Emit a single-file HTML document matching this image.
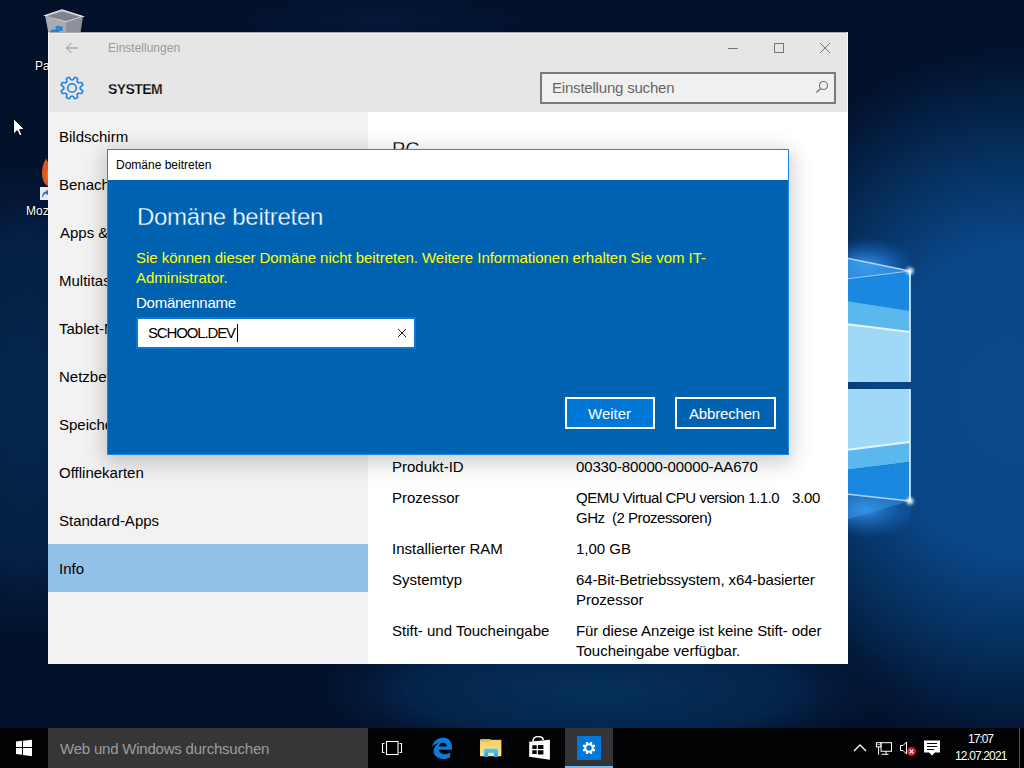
<!DOCTYPE html>
<html><head><meta charset="utf-8">
<style>
*{margin:0;padding:0;box-sizing:border-box}
html,body{width:1024px;height:768px;overflow:hidden}
body{position:relative;font-family:"Liberation Sans",sans-serif;background:#02112a}
.a{position:absolute}
.t15{position:absolute;font-size:15px;line-height:20px;white-space:nowrap;color:#000}
.t12{position:absolute;font-size:12px;line-height:16px;white-space:nowrap}
#wall{left:0;top:0;width:1024px;height:768px}
#win{left:48px;top:32px;width:800px;height:632px;background:#e6e6e6;overflow:hidden}
#side{left:0;top:80px;width:320px;height:552px;background:#f2f2f2}
#content{left:320px;top:80px;width:480px;height:552px;background:#fff}
#dlg{left:107px;top:149px;width:682px;height:306px;background:#0063b1;border:1px solid #1e88e5;box-shadow:0 5px 20px 3px rgba(0,0,0,.2)}
#dlgtitle{left:0;top:0;width:680px;height:30px;background:#fff}
#taskbar{left:0;top:728px;width:1024px;height:40px;background:#020305}
</style></head><body>
<svg id="wall" class="a" width="1024" height="768" viewBox="0 0 1024 768">
<defs>
<radialGradient id="g1" cx="1010" cy="420" r="470" gradientTransform="translate(1010 420) scale(1 0.95) translate(-1010 -420)" gradientUnits="userSpaceOnUse">
<stop offset="0" stop-color="#0c4e92"/><stop offset="0.3" stop-color="#0a4584"/><stop offset="0.55" stop-color="#06305f"/><stop offset="0.8" stop-color="#031a3a"/><stop offset="1" stop-color="#021128" stop-opacity="0"/>
</radialGradient>
<radialGradient id="g2" cx="600" cy="720" r="220" gradientTransform="translate(600 720) scale(1.3 0.5) translate(-600 -720)" gradientUnits="userSpaceOnUse">
<stop offset="0" stop-color="#063266"/><stop offset="1" stop-color="#063266" stop-opacity="0"/>
</radialGradient>
<radialGradient id="glowT">
<stop offset="0" stop-color="#3aa0ff" stop-opacity="0.9"/><stop offset="1" stop-color="#1a70d0" stop-opacity="0"/>
</radialGradient>
<radialGradient id="glowB">
<stop offset="0" stop-color="#3aa0ff" stop-opacity="0.8"/><stop offset="1" stop-color="#1a70d0" stop-opacity="0"/>
</radialGradient>
<linearGradient id="p1" x1="0" y1="0" x2="0" y2="1">
<stop offset="0" stop-color="#1a86e0"/><stop offset="1" stop-color="#2a95e8"/>
</linearGradient>
<radialGradient id="rA"><stop offset="0" stop-color="#0b4a8a"/><stop offset="0.42" stop-color="#0a4585"/><stop offset="0.62" stop-color="#063262"/><stop offset="0.82" stop-color="#031c3e"/><stop offset="1" stop-color="#02102a" stop-opacity="0"/></radialGradient>
<radialGradient id="rB"><stop offset="0" stop-color="#05305a"/><stop offset="0.6" stop-color="#04244a"/><stop offset="1" stop-color="#02102a" stop-opacity="0"/></radialGradient>
<radialGradient id="rC"><stop offset="0" stop-color="#05284e"/><stop offset="0.6" stop-color="#041f42"/><stop offset="1" stop-color="#02102a" stop-opacity="0"/></radialGradient>
<radialGradient id="rD"><stop offset="0" stop-color="#04183a"/><stop offset="1" stop-color="#02102a" stop-opacity="0"/></radialGradient>
<filter id="blur2" x="-2" y="-2" width="5" height="5"><feGaussianBlur stdDeviation="1.8"/></filter>
<clipPath id="clipL"><rect x="0" y="0" width="911" height="768"/></clipPath>
</defs>
<rect width="1024" height="768" fill="#02102a"/>
<ellipse cx="1010" cy="400" rx="320" ry="380" fill="url(#rA)"/>
<ellipse cx="600" cy="690" rx="320" ry="80" fill="url(#rB)"/>
<ellipse cx="24" cy="400" rx="120" ry="280" fill="url(#rC)"/>
<ellipse cx="380" cy="20" rx="260" ry="40" fill="url(#rD)"/>
<!-- logo panes (visible part) -->
<ellipse cx="866" cy="266" rx="50" ry="28" fill="url(#glowT)" clip-path="url(#clipL)"/>
<ellipse cx="866" cy="510" rx="54" ry="28" fill="url(#glowB)" clip-path="url(#clipL)"/>
<path d="M846 258L910 271L846 279Z" fill="#3a9ef0" opacity="0.75"/>
<path d="M846 279L910 271L910 382L846 382Z" fill="#1a87e0"/>
<path d="M846 301L910 311L910 382L846 382Z" fill="#5ab8ee"/>
<path d="M846 324L910 332L910 382L846 382Z" fill="#a0d8f8"/>
<path d="M846 389L910 389L910 442L846 450Z" fill="#a0d8f8"/>
<path d="M846 450L910 442L910 462L846 470Z" fill="#5ab8ee"/>
<path d="M846 470L910 462L910 501L846 494Z" fill="#1a87e0"/>
<path d="M846 494L910 501L846 520Z" fill="#3a9ef0" opacity="0.45"/>
<path d="M846 324L910 332" stroke="#f0faff" stroke-width="2" opacity="0.9"/>
<path d="M846 450L910 442" stroke="#f0faff" stroke-width="2" opacity="0.9"/>
<path d="M846 258L910 271" stroke="#cfeaff" stroke-width="1.5" opacity="0.8"/>
<path d="M846 279L910 271" stroke="#cfeaff" stroke-width="1.2" opacity="0.7"/>
<path d="M846 494L910 501" stroke="#cfeaff" stroke-width="1.5" opacity="0.8"/>
<path d="M910 271V382M910 389V501" stroke="#e0f4ff" stroke-width="1.6"/>
<circle cx="910" cy="271" r="3.5" fill="#fff" opacity="0.85" filter="url(#blur2)"/>
<circle cx="910" cy="501" r="3.5" fill="#fff" opacity="0.85" filter="url(#blur2)"/>
</svg>

<!-- desktop icons -->
<svg class="a" style="left:40px;top:6px" width="48" height="28" viewBox="0 0 48 28">
<path d="M5 9.5L22 3.8L43 10.5L26 16.2Z" fill="#b9bcc2" stroke="#eceef2" stroke-width="1.2"/>
<path d="M5 9.5L26 16.2L26 30L9 30Z" fill="#a8abb1"/>
<path d="M26 16.2L43 10.5L40 30L26 30Z" fill="#8e9197"/>
<path d="M7 10.2L22 5.6L40 10.8L26 15Z" fill="#7f8389"/>
<path d="M9 28C9.5 25 11.5 23.5 14 23.5L16 23.8L15.5 21.5L20.5 24.5L16.5 27.5L16.3 25.8C14 25.5 12 26.3 11.5 28Z" fill="#1f7fd8"/>
<path d="M15.5 20.5C17.5 19.3 19.5 19.5 21 21L22.5 19.8L22.5 25L18 24.5L19.5 23.2C18.5 22.2 17 22 15.8 22.8Z" fill="#1f7fd8"/>
</svg>
<div class="a" style="left:35px;top:58px;font-size:12px;line-height:16px;color:#fff;text-shadow:0 0 2px #000,1px 1px 1px #000">Pa</div>
<svg class="a" style="left:36px;top:155px" width="14" height="48" viewBox="0 0 14 48">
<path d="M10.2 3.5C11 6 12 8 14 9V32C9.5 31 6 26 6 18C6 12 7.5 8 10.2 3.5Z" fill="#e0561c"/>
<path d="M14 12C11.5 14 10 16 10 19C10 24 11.5 27 14 28Z" fill="#ee7a22" opacity="0.7"/>
<rect x="4" y="32" width="10" height="13" fill="#e9edf2"/>
<path d="M6 43.5C6 39 7.5 36.5 10.5 36.5V34.5L14 37.5L10.5 40.5V38.5C8.5 38.5 7 40.5 6 43.5Z" fill="#3468b8"/>
</svg>
<div class="a" style="left:26px;top:203px;font-size:12px;line-height:16px;color:#fff;text-shadow:0 0 2px #000,1px 1px 1px #000">Moz</div>
<!-- cursor -->
<svg class="a" style="left:13px;top:118px" width="13" height="20" viewBox="0 0 13 20"><path d="M0.5 0.5V16.2L4.2 12.6L6.7 17.8L9 16.8L6.6 11.6H11.7Z" fill="#fff" stroke="#000" stroke-width="1"/></svg>
<div id="win" class="a">
  <div class="a" style="left:0;top:0;width:800px;height:1px;background:#a9a9a9"></div>
  <div class="a" style="left:0;top:1px;width:800px;height:1px;background:#f2f2f2"></div>
  <div class="a" style="left:0;top:0;width:1px;height:632px;background:#f4f4f4"></div>
  <div class="a" style="left:799px;top:0;width:1px;height:632px;background:#f4f4f4"></div>
  <!-- back arrow -->
  <svg class="a" style="left:17px;top:10px" width="14" height="12" viewBox="0 0 14 12"><path d="M13 6H1.5M6.5 1L1.5 6l5 5" fill="none" stroke="#8c8c8c" stroke-width="1"/></svg>
  <div class="t12" style="left:60px;top:8px;color:#999">Einstellungen</div>
  <!-- caption buttons -->
  <div class="a" style="left:680px;top:16px;width:10px;height:1px;background:#777"></div>
  <div class="a" style="left:726px;top:11px;width:10px;height:10px;border:1px solid #777"></div>
  <svg class="a" style="left:772px;top:11px" width="10" height="10" viewBox="0 0 10 10"><path d="M0 0L10 10M10 0L0 10" stroke="#777" stroke-width="1"/></svg>
  <!-- gear -->
  <svg class="a" style="left:11px;top:43px" width="26" height="26" viewBox="0 0 26 26"><g fill="none" stroke="#1a7fd9" stroke-width="1.5" stroke-linejoin="round"><path d="M13.90 4.85 L15.87 2.17 L18.63 3.32 L18.13 6.60 L19.40 7.87 L22.68 7.37 L23.83 10.13 L21.15 12.10 L21.15 13.90 L23.83 15.87 L22.68 18.63 L19.40 18.13 L18.13 19.40 L18.63 22.68 L15.87 23.83 L13.90 21.15 L12.10 21.15 L10.13 23.83 L7.37 22.68 L7.87 19.40 L6.60 18.13 L3.32 18.63 L2.17 15.87 L4.85 13.90 L4.85 12.10 L2.17 10.13 L3.32 7.37 L6.60 7.87 L7.87 6.60 L7.37 3.32 L10.13 2.17 L12.10 4.85Z"/><circle cx="13" cy="13" r="4.3"/></g></svg>
  <div class="a" style="left:60px;top:48px;font-size:14px;line-height:18px;font-weight:bold;letter-spacing:-0.6px;color:#000;-webkit-text-stroke:0.25px #e6e6e6">SYSTEM</div>
  <!-- search -->
  <div class="a" style="left:492px;top:40px;width:296px;height:32px;border:2px solid #7a7a7a;background:#f0f0f0"></div>
  <div class="t15" style="left:504px;top:46px;color:#666;letter-spacing:-0.2px">Einstellung suchen</div>
  <svg class="a" style="left:767px;top:47px" width="14" height="16" viewBox="0 0 14 16"><circle cx="8.5" cy="6.5" r="4" fill="none" stroke="#777" stroke-width="1.2"/><path d="M5.6 9.4L1.5 13.5" stroke="#777" stroke-width="1.4"/></svg>
  <div id="side" class="a">
    <div class="t15" style="left:11px;top:15px">Bildschirm</div>
    <div class="t15" style="left:11px;top:63px">Benachrichtigungen</div>
    <div class="t15" style="left:12px;top:111px">Apps &amp; Features</div>
    <div class="t15" style="left:11px;top:159px">Multitasking</div>
    <div class="t15" style="left:11px;top:207px">Tablet-Modus</div>
    <div class="t15" style="left:11px;top:255px">Netzbetrieb</div>
    <div class="t15" style="left:11px;top:303px">Speicher</div>
    <div class="t15" style="left:11px;top:351px">Offlinekarten</div>
    <div class="t15" style="left:11px;top:399px">Standard-Apps</div>
    <div class="a" style="left:0;top:432px;width:320px;height:48px;background:#91c1e8"></div>
    <div class="t15" style="left:11px;top:447px">Info</div>
  </div>
  <div id="content" class="a">
    <div class="a" style="left:24px;top:25px;font-size:20px;line-height:24px;letter-spacing:0px;color:#000;-webkit-text-stroke:0.3px #fff">PC</div>
    <div class="t15" style="left:24px;top:345px">Produkt-ID</div>
    <div class="t15" style="left:208px;top:345px;letter-spacing:-0.15px">00330-80000-00000-AA670</div>
    <div class="t15" style="left:24px;top:376px">Prozessor</div>
    <div class="t15" style="left:208px;top:376px;letter-spacing:-0.47px">QEMU Virtual CPU version 1.1.0</div><div class="t15" style="left:424px;top:376px;letter-spacing:-0.3px">3.00</div>
    <div class="t15" style="left:208px;top:396px;letter-spacing:-0.47px">GHz &nbsp;(2 Prozessoren)</div>
    <div class="t15" style="left:24px;top:427px">Installierter RAM</div>
    <div class="t15" style="left:208px;top:427px">1,00 GB</div>
    <div class="t15" style="left:24px;top:458px">Systemtyp</div>
    <div class="t15" style="left:208px;top:458px;letter-spacing:-0.11px">64-Bit-Betriebssystem, x64-basierter</div>
    <div class="t15" style="left:208px;top:478px">Prozessor</div>
    <div class="t15" style="left:24px;top:509px">Stift- und Toucheingabe</div>
    <div class="t15" style="left:208px;top:509px;letter-spacing:-0.08px">Für diese Anzeige ist keine Stift- oder</div>
    <div class="t15" style="left:208px;top:529px">Toucheingabe verfügbar.</div>
  </div>
</div>

<div id="dlg" class="a">
  <div id="dlgtitle" class="a"></div>
  <div class="t12" style="left:8px;top:7px;color:#000">Domäne beitreten</div>
  <div class="a" style="left:29px;top:52px;font-size:24px;line-height:30px;letter-spacing:-0.3px;color:#fff;white-space:nowrap;-webkit-text-stroke:0.35px #0063b1">Domäne beitreten</div>
  <div class="t15" style="left:28px;top:98px;color:#ffff00;letter-spacing:-0.04px">Sie können dieser Domäne nicht beitreten. Weitere Informationen erhalten Sie vom IT-</div>
  <div class="t15" style="left:28px;top:118px;color:#ffff00">Administrator.</div>
  <div class="t15" style="left:28px;top:143px;color:#fff;letter-spacing:-0.25px">Domänenname</div>
  <div class="a" style="left:28px;top:167px;width:280px;height:32px;background:#fff;border:2px solid #0a78d4"></div>
  <div class="t15" style="left:40px;top:173px;color:#000;letter-spacing:-1.15px">SCHOOL.DEV</div>
  <div class="a" style="left:129px;top:174px;width:1px;height:18px;background:#000"></div>
  <svg class="a" style="left:289px;top:178px" width="10" height="10" viewBox="0 0 10 10"><path d="M1 1L9 9M9 1L1 9" stroke="#222" stroke-width="1"/></svg>
  <div class="a" style="left:457px;top:247px;width:90px;height:32px;background:#0078d7;border:2px solid #fff"></div>
  <div class="t15" style="left:480px;top:254px;color:#fff">Weiter</div>
  <div class="a" style="left:567px;top:247px;width:101px;height:32px;background:#0063b1;border:2px solid #fff"></div>
  <div class="t15" style="left:581px;top:254px;color:#fff;letter-spacing:-0.17px">Abbrechen</div>
</div>

<div id="taskbar" class="a">
  <!-- start logo -->
  <svg class="a" style="left:16px;top:11px" width="17" height="19" viewBox="0 0 17 19"><path d="M0 2.6L6 1.8V8H0ZM7 1.7L16 0.7V8H7ZM0 9H6V15.8L0 15ZM7 9H16V17.2L7 16Z" fill="#fff"/></svg>
  <div class="a" style="left:48px;top:0;width:320px;height:40px;background:#363636"></div>
  <div class="t15" style="left:60px;top:11px;color:#9d9d9d;letter-spacing:-0.21px">Web und Windows durchsuchen</div>
  <!-- task view -->
  <svg class="a" style="left:381px;top:12px" width="22" height="16" viewBox="0 0 22 16"><g fill="none" stroke="#fff" stroke-width="1.1"><rect x="5.5" y="1.5" width="11.5" height="13"/><path d="M3.5 3.5H1.5V12.5H3.5M18.5 3.5H20.5V12.5H18.5"/></g></svg>
  <!-- edge -->
  <svg class="a" style="left:431px;top:9px" width="22" height="23" viewBox="0 0 22 23"><path fill="#0b7ad8" fill-rule="evenodd" d="M0.8 10C2.5 4 7 0.5 12 0.5C17.5 0.5 21 4.5 21 10.5V12.8H8C8.3 15.7 10.5 17.2 13.2 17.2C15.5 17.2 17.5 16.6 19.2 15.5V20.2C17.2 21.4 14.8 22 12.2 22C6.2 22 2.6 18.2 2.6 14C2.6 10.6 4.8 7.8 7.8 6.3C4.8 6.5 2.5 8 0.8 10ZM8 9.5H15.8C15.6 7.2 14 5.8 11.9 5.8C9.8 5.8 8.3 7.2 8 9.5Z"/></svg>
  <!-- explorer folder -->
  <svg class="a" style="left:480px;top:11px" width="22" height="19" viewBox="0 0 22 19"><defs><linearGradient id="fold" x1="0" y1="0" x2="0" y2="1"><stop offset="0" stop-color="#f3cf6a"/><stop offset="1" stop-color="#fbe08e"/></linearGradient><linearGradient id="fblue" x1="0" y1="0" x2="0" y2="1"><stop offset="0" stop-color="#55c8f2"/><stop offset="1" stop-color="#1aa7e6"/></linearGradient></defs><path d="M0.7 0H9.7L10.5 1H0.7Z" fill="#e0b048"/><rect x="0" y="0.8" width="21.4" height="16.4" fill="url(#fold)"/><rect x="0.7" y="0.2" width="9" height="2.4" fill="#e8b840"/><rect x="1.5" y="0.8" width="1.5" height="1" fill="#56b0c8"/><path d="M4.2 9.8H17.9V18H14V13.7H8.1V18H4.2Z" fill="url(#fblue)"/></svg>
  <!-- store -->
  <svg class="a" style="left:528px;top:8px" width="24" height="25" viewBox="0 0 24 25"><path d="M5 5.5C5 2 7 0.6 10 0.6C13 0.6 15.2 1.8 15.2 4" fill="none" stroke="#fff" stroke-width="1.5"/><path d="M1.2 5.8L21.9 3.7V23.7L1.2 20.7Z" fill="#fff"/><path d="M4.3 9.3H8.7V13.1H4.3ZM9.9 9.1H15.4V13.1H9.9ZM4.3 14.3H8.7V18H4.3ZM9.9 14.3H15.4V18.5H9.9Z" fill="#000"/></svg>
  <!-- settings active -->
  <div class="a" style="left:565px;top:0;width:48px;height:40px;background:#333438"></div>
  <div class="a" style="left:565px;top:38px;width:48px;height:2px;background:#76b9ed"></div>
  <div class="a" style="left:577px;top:8px;width:24px;height:24px;background:#0078d7"></div>
  <svg class="a" style="left:581px;top:12px" width="16" height="16" viewBox="0 0 16 16"><path d="M8.52 3.33 L9.52 1.68 L11.40 2.46 L10.94 4.33 L11.67 5.06 L13.54 4.60 L14.32 6.48 L12.67 7.48 L12.67 8.52 L14.32 9.52 L13.54 11.40 L11.67 10.94 L10.94 11.67 L11.40 13.54 L9.52 14.32 L8.52 12.67 L7.48 12.67 L6.48 14.32 L4.60 13.54 L5.06 11.67 L4.33 10.94 L2.46 11.40 L1.68 9.52 L3.33 8.52 L3.33 7.48 L1.68 6.48 L2.46 4.60 L4.33 5.06 L5.06 4.33 L4.60 2.46 L6.48 1.68 L7.48 3.33Z M8 5.3A2.7 2.7 0 1 0 8 10.7A2.7 2.7 0 1 0 8 5.3Z" fill="#fff" fill-rule="evenodd"/></svg>
  <!-- tray -->
  <svg class="a" style="left:853px;top:15px" width="14" height="9" viewBox="0 0 14 9"><path d="M1 8L7 2L13 8" fill="none" stroke="#fff" stroke-width="1.3"/></svg>
  <svg class="a" style="left:875px;top:13px" width="18" height="15" viewBox="0 0 18 15"><g fill="none" stroke="#fff" stroke-width="1"><rect x="6" y="1.7" width="10.5" height="8.55"/><rect x="1.4" y="1.7" width="4.6" height="4.15"/><path d="M3.6 5.85V13.8M11 10.25V13.3M6.5 13.3H13.5M2.7 3.2L3.6 4.1L4.5 3.2"/></g></svg>
  <svg class="a" style="left:899px;top:13px" width="18" height="16" viewBox="0 0 18 16"><path d="M1.5 4.5H4L7.5 1V13L4 9.5H1.5Z" fill="none" stroke="#fff" stroke-width="1"/><circle cx="12.5" cy="10.5" r="4.5" fill="#e81123"/><path d="M10.6 8.6L14.4 12.4M14.4 8.6L10.6 12.4" stroke="#fff" stroke-width="1.2"/></svg>
  <svg class="a" style="left:923px;top:12px" width="18" height="18" viewBox="0 0 18 18"><path d="M1 0.5H17V12.5H12L9 15.5L6 12.5H1Z" fill="#fff"/><path d="M4 3.5H14M4 6.5H14M4 9.5H11" stroke="#000" stroke-width="1.2"/></svg>
  <div class="t12" style="left:968px;top:3px;color:#fff;letter-spacing:-1px">17:07</div>
  <div class="t12" style="left:955px;top:20px;color:#fff;letter-spacing:-0.85px">12.07.2021</div>
  <div class="a" style="left:1019px;top:0;width:1px;height:40px;background:#5a5a5a"></div>
</div>
</body></html>
